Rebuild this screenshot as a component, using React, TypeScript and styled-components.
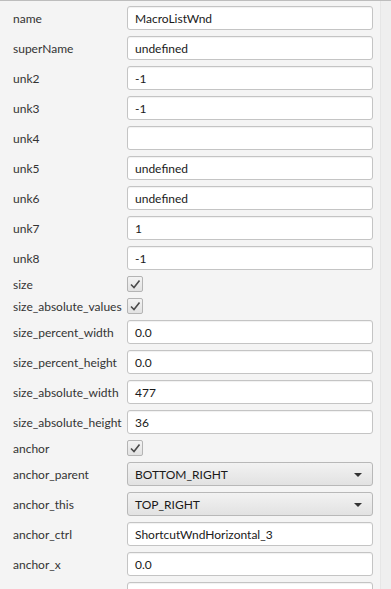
import styled, { createGlobalStyle } from 'styled-components';

type Row =
  | { kind: 'text'; label: string; value: string }
  | { kind: 'check'; label: string; checked: boolean }
  | { kind: 'combo'; label: string; value: string };

// last row is only peeking in at the bottom edge, its text lies below the fold
const ROWS: Row[] = [
  { kind: 'text', label: 'name', value: 'MacroListWnd' },
  { kind: 'text', label: 'superName', value: 'undefined' },
  { kind: 'text', label: 'unk2', value: '-1' },
  { kind: 'text', label: 'unk3', value: '-1' },
  { kind: 'text', label: 'unk4', value: '' },
  { kind: 'text', label: 'unk5', value: 'undefined' },
  { kind: 'text', label: 'unk6', value: 'undefined' },
  { kind: 'text', label: 'unk7', value: '1' },
  { kind: 'text', label: 'unk8', value: '-1' },
  { kind: 'check', label: 'size', checked: true },
  { kind: 'check', label: 'size_absolute_values', checked: true },
  { kind: 'text', label: 'size_percent_width', value: '0.0' },
  { kind: 'text', label: 'size_percent_height', value: '0.0' },
  { kind: 'text', label: 'size_absolute_width', value: '477' },
  { kind: 'text', label: 'size_absolute_height', value: '36' },
  { kind: 'check', label: 'anchor', checked: true },
  { kind: 'combo', label: 'anchor_parent', value: 'BOTTOM_RIGHT' },
  { kind: 'combo', label: 'anchor_this', value: 'TOP_RIGHT' },
  { kind: 'text', label: 'anchor_ctrl', value: 'ShortcutWndHorizontal_3' },
  { kind: 'text', label: 'anchor_x', value: '0.0' },
  { kind: 'text', label: '', value: '' },
];

const GlobalStyle = createGlobalStyle`
  html, body {
    margin: 0;
    padding: 0;
    background: #f4f4f4;
    overflow: hidden;
  }
`;

const Check = () => (
  <svg width="12" height="12" viewBox="0 0 12 12">
    <path d="M2 6.5 L5 9.5 L10.5 2.5" fill="none" stroke="#4a4a4a" strokeWidth="1.6" />
  </svg>
);

const App = () => {
  return (
    <>
      <GlobalStyle />
      <Window>
        <Form>
          {ROWS.map((row, i) => (
            <FormRow key={i} $short={row.kind === 'check'}>
              <Label>{row.label}</Label>
              {row.kind === 'text' && <Field>{row.value}</Field>}
              {row.kind === 'check' && (
                <CheckBox>{row.checked && <Check />}</CheckBox>
              )}
              {row.kind === 'combo' && (
                <Combo>
                  {row.value}
                  <Arrow />
                </Combo>
              )}
            </FormRow>
          ))}
        </Form>
        <ScrollTrack />
      </Window>
    </>
  );
};

export default App;

const Window = styled.div`
  display: flex;
  width: 391px;
  height: 589px;
  overflow: hidden;
  border-top: 1px solid #bdbdbd;
  box-sizing: border-box;
  background: #f4f4f4;
  font-family: 'Lato', 'Noto Sans', sans-serif;
  font-size: 12px;
`;

const Form = styled.div`
  flex: 1;
  display: flex;
  flex-direction: column;
  gap: 6px;
  padding: 5px 7px 0 13px;
`;

const FormRow = styled.div<{ $short: boolean }>`
  display: grid;
  grid-template-columns: 114px 1fr;
  align-items: center;
  height: ${props => (props.$short ? '16px' : '24px')};
  flex-shrink: 0;
`;

const Label = styled.div`
  color: #333333;
  white-space: nowrap;
`;

const Field = styled.div`
  height: 24px;
  box-sizing: border-box;
  padding: 0 7px;
  display: flex;
  align-items: center;
  background: #ffffff;
  border: 1px solid #c4c4c4;
  border-radius: 3px;
  box-shadow: inset 0 1px 1px rgba(0, 0, 0, 0.06);
  color: #1a1a1a;
  white-space: nowrap;
`;

const CheckBox = styled.div`
  width: 16px;
  height: 16px;
  box-sizing: border-box;
  border: 1px solid #b4b4b4;
  border-radius: 2px;
  background: linear-gradient(#f3f3f3, #e2e2e2);
  display: flex;
  align-items: center;
  justify-content: center;
`;

const Combo = styled.div`
  position: relative;
  height: 24px;
  box-sizing: border-box;
  padding: 0 7px;
  display: flex;
  align-items: center;
  border: 1px solid #b8b8b8;
  border-radius: 3px;
  background: linear-gradient(#f2f2f2, #e2e2e2);
  color: #1a1a1a;
`;

const Arrow = styled.span`
  position: absolute;
  right: 10px;
  top: 10px;
  width: 0;
  height: 0;
  border-left: 4px solid transparent;
  border-right: 4px solid transparent;
  border-top: 4px solid #333333;
`;

const ScrollTrack = styled.div`
  width: 10px;
  flex-shrink: 0;
  background: #efefef;
  border-left: 1px solid #e6e6e6;
`;
